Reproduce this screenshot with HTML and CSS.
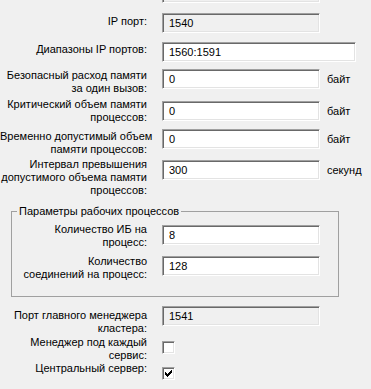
FILE: index.html
```html
<!DOCTYPE html>
<html lang="ru">
<head>
<meta charset="utf-8">
<link rel="stylesheet" href="styles.css">
</head>
<body>
<div class="form">
  <div class="row r0">
    <div class="label"></div>
    <div class="control"><div class="box readonly"></div></div>
  </div>
  <div class="row r1">
    <div class="label">IP порт:</div>
    <div class="control"><div class="box readonly">1540</div></div>
  </div>
  <div class="row r2">
    <div class="label">Диапазоны IP портов:</div>
    <div class="control"><div class="box wide">1560:1591</div></div>
  </div>
  <div class="row r3">
    <div class="label">Безопасный расход памяти<br>за один вызов:</div>
    <div class="control"><div class="box">0</div><span class="unit">байт</span></div>
  </div>
  <div class="row r4">
    <div class="label">Критический объем памяти<br>процессов:</div>
    <div class="control"><div class="box">0</div><span class="unit">байт</span></div>
  </div>
  <div class="row r5">
    <div class="label">Временно допустимый объем<br>памяти процессов:</div>
    <div class="control"><div class="box">0</div><span class="unit">байт</span></div>
  </div>
  <div class="row r6">
    <div class="label">Интервал превышения<br>допустимого объема памяти<br>процессов:</div>
    <div class="control"><div class="box">300</div><span class="unit">секунд</span></div>
  </div>

  <fieldset class="group">
    <legend>Параметры рабочих процессов</legend>
    <div class="row g1">
      <div class="label">Количество ИБ на<br>процесс:</div>
      <div class="control"><div class="box">8</div></div>
    </div>
    <div class="row g2">
      <div class="label">Количество<br>соединений на процесс:</div>
      <div class="control"><div class="box">128</div></div>
    </div>
  </fieldset>

  <div class="row r7">
    <div class="label">Порт главного менеджера<br>кластера:</div>
    <div class="control"><div class="box readonly">1541</div></div>
  </div>
  <div class="row r8">
    <div class="label">Менеджер под каждый<br>сервис:</div>
    <div class="control"><div class="check"></div></div>
  </div>
  <div class="row r9">
    <div class="label">Центральный сервер:</div>
    <div class="control">
      <div class="check">
        <svg width="7" height="7" viewBox="0 0 7 7" shape-rendering="crispEdges">
          <rect x="6" y="0" width="1" height="1"/>
          <rect x="5" y="1" width="2" height="1"/>
          <rect x="0" y="2" width="1" height="1"/>
          <rect x="4" y="2" width="3" height="1"/>
          <rect x="0" y="3" width="2" height="1"/>
          <rect x="3" y="3" width="3" height="1"/>
          <rect x="0" y="4" width="5" height="1"/>
          <rect x="1" y="5" width="3" height="1"/>
          <rect x="2" y="6" width="1" height="1"/>
        </svg>
      </div>
    </div>
  </div>
</div>
</body>
</html>
```

FILE: styles.css
```css
html, body {
  margin: 0;
  padding: 0;
  background: #f0f0f0;
  overflow: hidden;
}

body {
  width: 371px;
  height: 389px;
  font-family: "Liberation Sans", Arial, sans-serif;
  font-size: 11px;
  color: #000;
}

.form {
  margin-top: -17px;
}

.row {
  display: flex;
  align-items: flex-start;
}

.label {
  width: 147px;
  flex: none;
  text-align: right;
  line-height: 13px;
  white-space: nowrap;
}

.control {
  margin-left: 15px;
  display: flex;
  align-items: center;
}

.box {
  box-sizing: border-box;
  width: 158px;
  height: 20px;
  background: #fff;
  border-top: 1px solid #a0a0a0;
  border-left: 1px solid #a0a0a0;
  border-right: 1px solid #fff;
  border-bottom: 1px solid #fff;
  box-shadow: inset 1px 1px 0 #696969, inset -1px -1px 0 #e3e3e3;
  padding: 0 5px 0 6px;
  line-height: 18px;
  white-space: nowrap;
}

.box.readonly {
  background: #f0f0f0;
}

.box.wide {
  width: 194px;
}

.unit {
  margin-left: 7px;
}

.check {
  box-sizing: border-box;
  width: 13px;
  height: 13px;
  background: #fff;
  border-top: 1px solid #a0a0a0;
  border-left: 1px solid #a0a0a0;
  border-right: 1px solid #fff;
  border-bottom: 1px solid #fff;
  box-shadow: inset 1px 1px 0 #696969, inset -1px -1px 0 #e3e3e3;
  display: flex;
  align-items: flex-start;
  justify-content: flex-start;
  padding: 2px 0 0 2px;
}

.check svg {
  display: block;
  fill: #000;
}

/* row geometry */
.r0 { height: 30px; }
.r1 { height: 29px; }
.r1 .label { padding-top: 2px; }
.r2 { height: 27px; }
.r2 .label { padding-top: 1px; }
.r3 { height: 32px; }
.r4 { height: 28px; }
.r4 .label { margin-top: -3px; }
.r5 { height: 31px; }
.r5 .label { padding-top: 1px; }
.r6 { height: 45px; }
.r6 .label { margin-top: -2px; }

.group {
  margin: 0 0 0 11px;
  width: 328px;
  box-sizing: border-box;
  padding: 0;
  border: 1px solid #a0a0a0;
  min-width: 0;
}

.group legend {
  margin-left: 5px;
  padding: 0 2px;
  line-height: 13px;
}

.group .label {
  width: 135px;
}

.g1 { height: 31px; margin-top: 7px; }
.g1 .label { margin-top: -2px; }
.g2 { height: 40px; }
.g2 .label { margin-top: -1px; }

.r7 { height: 35px; margin-top: 9px; }
.r7 .label { padding-top: 3px; }
.r8 { height: 26px; }
.r8 .label { margin-top: -5px; }
.r9 .label { margin-top: -5px; }
```
